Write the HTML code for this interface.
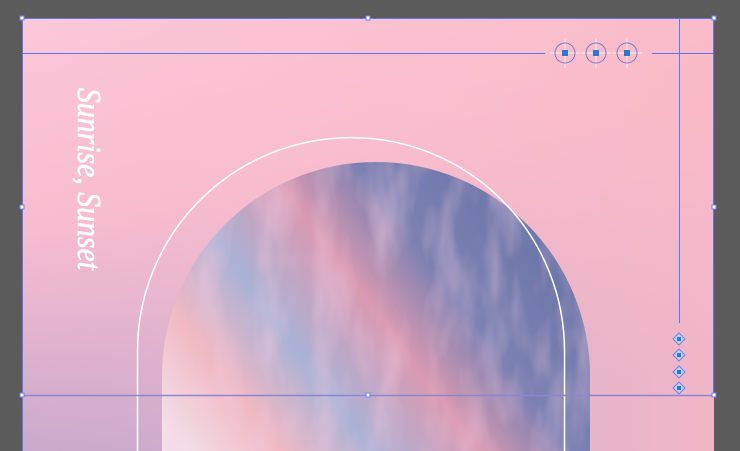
<!DOCTYPE html>
<html><head><meta charset="utf-8"><style>
html,body{margin:0;padding:0;background:#5b5b5b;width:740px;height:451px;overflow:hidden}
svg{display:block;overflow:hidden}
</style></head><body>
<svg width="740" height="451" viewBox="0 0 740 451" xmlns="http://www.w3.org/2000/svg">
<defs>
<linearGradient id="bg" x1="0" y1="0" x2="0.3" y2="1">
<stop offset="0" stop-color="#fcc8da"/>
<stop offset="0.45" stop-color="#f7bccf"/>
<stop offset="1" stop-color="#c2a6cc"/>
</linearGradient>
<linearGradient id="bgr" x1="0" y1="0" x2="1" y2="0">
<stop offset="0" stop-color="#fbbfcc" stop-opacity="0"/>
<stop offset="1" stop-color="#fbbac6" stop-opacity="0.8"/>
</linearGradient>
<linearGradient id="sky" x1="0" y1="0.9" x2="1" y2="0.4">
<stop offset="0" stop-color="#f3e0e8"/>
<stop offset="0.18" stop-color="#f0b8c2"/>
<stop offset="0.35" stop-color="#aab2d6"/>
<stop offset="0.55" stop-color="#d999b0"/>
<stop offset="0.72" stop-color="#7b80b2"/>
<stop offset="1" stop-color="#6b75a8"/>
</linearGradient>
<filter id="tex"><feTurbulence type="fractalNoise" baseFrequency="0.035 0.012" numOctaves="3" seed="4"/><feColorMatrix type="matrix" values="0 0 0 0 0.9  0 0 0 0 0.6  0 0 0 0 0.75  0 0 0 1.3 -0.5"/></filter>
<clipPath id="arch"><path d="M162 451 V376 A214 214 0 0 1 590 376 V451 Z"/></clipPath>
<clipPath id="frame"><rect x="0" y="0" width="740" height="451"/></clipPath>
</defs>
<g clip-path="url(#frame)">
<rect x="22" y="18" width="692" height="433" fill="url(#bg)"/>
<rect x="22" y="18" width="692" height="433" fill="url(#bgr)"/>
<line x1="22.5" y1="395" x2="22.5" y2="451" stroke="#111" stroke-width="1"/>
<g clip-path="url(#arch)">
<rect x="162" y="160" width="430" height="291" fill="url(#sky)"/>
<rect x="162" y="160" width="430" height="291" filter="url(#tex)" opacity="0.7"/>
</g>
<path d="M137.5 451 V351 A213.5 213.5 0 0 1 564.5 351 V451" fill="none" stroke="#fff" stroke-width="1.5"/>
<g stroke="#5a78f0" stroke-width="1" fill="none">
<path d="M22.5 451 V18.5 H713.5 V395"/>
<line x1="22" y1="53.5" x2="545" y2="53.5"/>
<line x1="652" y1="53.5" x2="714" y2="53.5"/>
<line x1="679.5" y1="18" x2="679.5" y2="323"/>
<line x1="22" y1="395.5" x2="714" y2="395.5" stroke="#8a86d0" stroke-width="1.5"/>
</g>
<g stroke="#fff" stroke-width="1" opacity="0.8">
<line x1="565" y1="38" x2="565" y2="68"/><line x1="550" y1="53" x2="580" y2="53"/>
<line x1="596" y1="38" x2="596" y2="68"/><line x1="581" y1="53" x2="611" y2="53"/>
<line x1="627" y1="38" x2="627" y2="68"/><line x1="612" y1="53" x2="642" y2="53"/>
</g>
<g stroke="#7b78c8" fill="none">
<circle cx="565" cy="53" r="10"/><circle cx="596" cy="53" r="10"/><circle cx="627" cy="53" r="10"/>
</g>
<g fill="#2a78d6">
<rect x="562" y="50" width="6" height="6"/><rect x="593" y="50" width="6" height="6"/><rect x="624" y="50" width="6" height="6"/>
</g>
<g stroke="#6f82e6" fill="#c8cdf2">
<path d="M679 333 l6 6 -6 6 -6 -6Z"/><path d="M679 349 l6 6 -6 6 -6 -6Z"/><path d="M679 366 l6 6 -6 6 -6 -6Z"/><path d="M679 382 l6 6 -6 6 -6 -6Z"/>
</g>
<g fill="#2a78d6"><rect x="677" y="337" width="4" height="4"/><rect x="677" y="353" width="4" height="4"/><rect x="677" y="370" width="4" height="4"/><rect x="677" y="386" width="4" height="4"/></g>
<g fill="#fff" stroke="#6f82e6"><rect x="20" y="16" width="4" height="4"/><rect x="712" y="16" width="4" height="4"/><rect x="366" y="16" width="4" height="4"/><rect x="20" y="205" width="4" height="4"/><rect x="712" y="205" width="4" height="4"/><rect x="20" y="393" width="4" height="4"/><rect x="712" y="393" width="4" height="4"/><rect x="366" y="393" width="4" height="4"/></g>
<text x="0" y="0" transform="translate(78 88) rotate(90)" font-family="Liberation Serif, serif" font-style="italic" font-size="34" fill="#fff" stroke="#fff" stroke-width="0.6" textLength="182" lengthAdjust="spacingAndGlyphs">Sunrise, Sunset</text>
</g>
</svg>
</body></html>
